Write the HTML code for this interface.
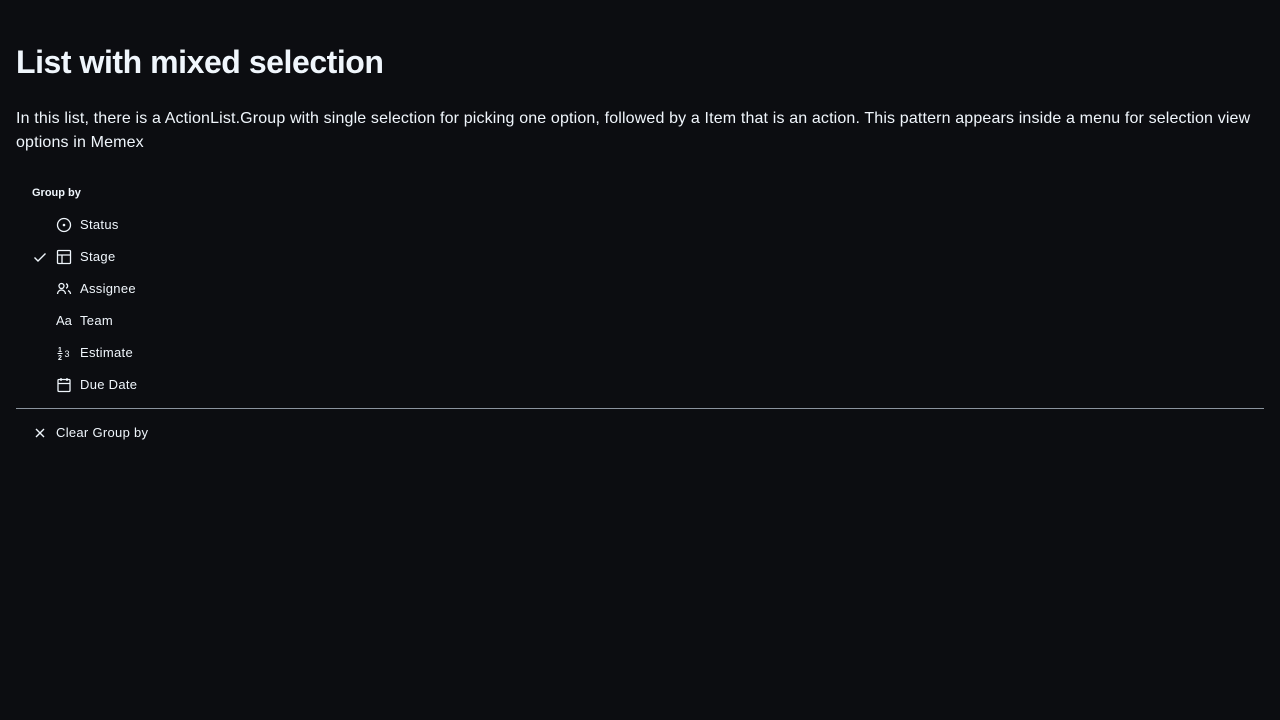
<!DOCTYPE html>
<html><head><style>
body{margin:0;background:#0c0d11;color:#f0f6fc;font-family:"Liberation Sans",sans-serif;}
h1{position:absolute;left:16px;top:42px;margin:0;font-size:32px;font-weight:bold;line-height:40px;color:#f0f6fc;letter-spacing:-0.45px}
p{position:absolute;left:16px;top:107px;margin:0;font-size:16px;line-height:24px;width:1250px;letter-spacing:0.15px}
.gh{position:absolute;left:32px;top:187px;font-size:11px;font-weight:bold}
.it{position:absolute;left:0;height:32px;font-size:13px;line-height:16px;letter-spacing:0.3px}
.it span{position:absolute;left:80px;top:0;white-space:nowrap}
.it svg{position:absolute;left:56px;top:0}
.it svg.ck{left:32px}
.sep{position:absolute;left:16px;top:408px;width:1248px;height:1px;background:#8b949e}
</style></head><body>
<h1>List with mixed selection</h1>
<p>In this list, there is a ActionList.Group with single selection for picking one option, followed by a Item that is an action. This pattern appears inside a menu for selection view options in Memex</p>
<div class="gh">Group by</div>
<div class="it" style="top:217px"><svg width="16" height="16" viewBox="0 0 16 16" fill="none" stroke="#f0f6fc" stroke-width="1.3"><circle cx="8" cy="8" r="6.5"/><circle cx="8" cy="8" r="1.3" fill="#f0f6fc" stroke="none"/></svg><span>Status</span></div>
<div class="it" style="top:249px"><svg class="ck" width="16" height="16" viewBox="0 0 16 16" fill="none" stroke="#f0f6fc" stroke-width="1.4"><path d="M2.5 8.5l3.5 3.5 7.5-7.5"/></svg><svg width="16" height="16" viewBox="0 0 16 16" fill="none" stroke="#f0f6fc" stroke-width="1.3"><rect x="1.5" y="1.5" width="13" height="13" rx="1"/><path d="M1.5 6h13M6 6v8.5"/></svg><span>Stage</span></div>
<div class="it" style="top:281px"><svg width="16" height="16" viewBox="0 0 16 16" fill="none" stroke="#f0f6fc" stroke-width="1.3"><circle cx="5.5" cy="5" r="2.5"/><path d="M1.5 13c0-2.5 2-4 4-4s4 1.5 4 4M10 2.8a2.3 2.3 0 010 4.4M12 9.5c1.5.8 2.5 2 2.5 3.5"/></svg><span>Assignee</span></div>
<div class="it" style="top:313px"><span style="left:56px;letter-spacing:0">Aa</span><span>Team</span></div>
<div class="it" style="top:345px"><svg width="16" height="16" viewBox="0 0 16 16"><text x="2" y="7" font-size="7" fill="#f0f6fc" font-family="Liberation Sans" font-weight="bold">1</text><text x="2" y="15" font-size="7" fill="#f0f6fc" font-family="Liberation Sans" font-weight="bold">2</text><text x="8.5" y="12" font-size="9" fill="#f0f6fc" font-family="Liberation Sans">3</text><path d="M1.5 8.5h5" stroke="#f0f6fc" stroke-width="1"/></svg><span>Estimate</span></div>
<div class="it" style="top:377px"><svg width="16" height="16" viewBox="0 0 16 16" fill="none" stroke="#f0f6fc" stroke-width="1.3"><rect x="2" y="2.5" width="12" height="12" rx="1"/><path d="M2 6.5h12M5 1v3M11 1v3"/></svg><span>Due Date</span></div>
<div class="sep"></div>
<div class="it" style="top:425px"><svg class="ck" width="16" height="16" viewBox="0 0 16 16" fill="none" stroke="#f0f6fc" stroke-width="1.4"><path d="M4 4l8 8M12 4l-8 8"/></svg><span style="left:56px">Clear Group by</span></div>
</body></html>
